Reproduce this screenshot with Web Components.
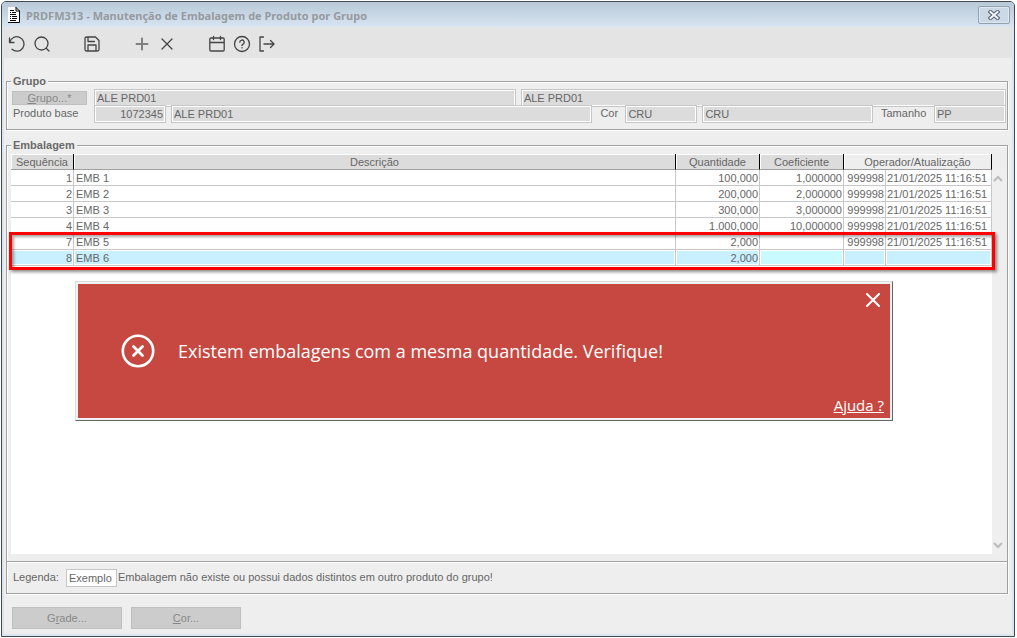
<!DOCTYPE html>
<html lang="pt-BR">
<head>
<meta charset="utf-8">
<title>PRDFM313 - Manutenção de Embalagem de Produto por Grupo</title>
<style>
  body { margin: 0; background: #fff; font: 11px/16px "Liberation Sans", Arial, sans-serif; color: #666; }
</style>
</head>
<body>
<app-window caption="PRDFM313 - Manutenção de Embalagem de Produto por Grupo">
  <tool-bar></tool-bar>
  <group-panel></group-panel>
  <package-panel>
    <error-dialog slot="dialog">Existem embalagens com a mesma quantidade. Verifique!</error-dialog>
  </package-panel>
  <legend-bar>Embalagem não existe ou possui dados distintos em outro produto do grupo!</legend-bar>
  <action-bar></action-bar>
</app-window>

<script>
const reset = `*{box-sizing:border-box} button,input{font:inherit;color:inherit;margin:0}`;

function define(name, html, setup) {
  const template = document.createElement('template');
  template.innerHTML = html;
  customElements.define(name, class extends HTMLElement {
    constructor() {
      super();
      this.attachShadow({ mode: 'open' }).append(template.content.cloneNode(true));
    }
    connectedCallback() { if (setup) setup(this, this.shadowRoot); }
  });
}

define('app-window', `
<style>${reset}
:host{display:flex;flex-direction:column;box-sizing:border-box;min-height:calc(100vh - 2px);margin:1px 2px 1px 1px;border:1px solid #42494e;border-radius:5px 5px 0 0;background:#d9e5f2;padding:0 2px 2px;overflow:hidden}
header{display:flex;align-items:center;height:25px;margin:0 -2px;padding:0 4px 0 6px;background:linear-gradient(#b9c9d7,#c7d6e5 50%,#d8e5f3)}
h1{flex:1;margin:0 0 0 6px;font:bold 11px/16px "Noto Sans","Open Sans",sans-serif;padding-top:2px;color:#969a9e}
button{display:flex;align-items:center;justify-content:center;width:32px;height:18px;padding:0;border:1px solid #93a0ae;border-radius:2px;background:#cbd8e6;box-shadow:inset 0 0 0 1px #dde8f3}
main{flex:1;display:flex;flex-direction:column;background:#eee}
</style>
<header>
  <svg width="12" height="16" viewBox="0 0 12 16"><path d="M0 0h8l4 4v12H0z" fill="#fff"/><path d="M8 0v4h4M11.5 4v11.5H0M8 .5l3.5 3.5" fill="none" stroke="#000"/><path d="M2 3.5h4M2 5.5h1m1 0h4M2 7.5h6M2 9.500h1m1 0h5M2 11.500h1m1 0h5M2 13.500h6" stroke="#000"/></svg>
  <h1></h1>
  <button aria-label="Fechar"><svg width="12" height="10" viewBox="0 0 12 10"><path d="M2.500 2l7 6m0-6l-7 6" stroke="#555f70" stroke-width="4" stroke-linecap="square"/><path d="M2.500 2l7 6m0-6l-7 6" stroke="#f4f7fa" stroke-width="2" stroke-linecap="square"/></svg></button>
</header>
<main><slot></slot></main>`, (host, root) => {
  root.querySelector('h1').textContent = host.getAttribute('caption');
});

define('tool-bar', `
<style>${reset}
:host{box-sizing:border-box;display:flex;height:31px;padding-top:2px;align-items:center;background:#e4e4e4}
button{display:flex;align-items:center;justify-content:center;width:25px;height:25px;padding:0;border:0;background:none;color:#444}
.gap{margin-left:25px}
.soft{color:#808080}
svg{fill:none;stroke:currentColor;stroke-width:1.300;stroke-linecap:round;stroke-linejoin:round}
</style>
<button aria-label="Desfazer"><svg width="18" height="18"><path d="M1.500 3v4.500H6M1.800 7.300A7.200 7.200 0 1 1 4 14.300"/></svg></button>
<button aria-label="Pesquisar"><svg width="18" height="18"><circle cx="8.500" cy="8.500" r="6.500"/><path d="M13.200 13.200L16 16"/></svg></button>
<button class="gap" aria-label="Salvar"><svg width="18" height="18"><path d="M3.500 2h9L16 5.500v9a1.500 1.500 0 0 1-1.500 1.500h-11A1.500 1.500 0 0 1 2 14.500v-11A1.500 1.500 0 0 1 3.500 2zM5 2v4.500h6.500M5 16V10h8v6"/></svg></button>
<button class="gap soft" aria-label="Adicionar"><svg width="18" height="18" style="stroke-width:2"><path d="M9 3.500v11M3.500 9h11"/></svg></button>
<button aria-label="Excluir"><svg width="18" height="18"><path d="M4 4l10 10M14 4L4 14"/></svg></button>
<button class="gap" aria-label="Calendário"><svg width="18" height="18"><path d="M3 3h12a1.200 1.200 0 0 1 1.200 1.200v10.600A1.200 1.200 0 0 1 15 16H3a1.200 1.200 0 0 1-1.200-1.200V4.200A1.200 1.200 0 0 1 3 3zM2 7.500h14M5.500 1.500v3M12.500 1.500v3"/></svg></button>
<button aria-label="Ajuda"><svg width="18" height="18"><circle cx="9" cy="9" r="7.500"/><path d="M6.800 7.200a2.200 2.200 0 1 1 3.300 1.900c-.8.400-1.100.8-1.100 1.400M9 12.700v.2"/></svg></button>
<button aria-label="Sair"><svg width="18" height="18"><path d="M5.500 2H2v14h3.500M6 9h10M12.500 5.500L16 9l-3.500 3.500"/></svg></button>`);

define('group-panel', `
<style>${reset}
:host{display:block;margin:16px 4px 0 2px}
fieldset{min-width:0;margin:0;padding:0 1px 6px 5px;border:1px solid #a0a0a0;box-shadow:1px 1px 0 #fff,inset 1px 1px 0 #fff}
legend{height:15px;line-height:15px;padding:0 2px;margin-left:-1px;background:#eee;font-weight:bold;color:#6a6a6a}
.row{display:flex;align-items:flex-start}
.row + .row{margin-top:-2px}
.lead{flex:none;width:82px}
button{display:block;width:75px;height:14px;margin-top:2px;padding:0;border:1px solid #bfbfbf;background:#ccc;color:#888;line-height:12px}
label{line-height:16px;padding-left:1px}
.mid{flex:none;padding-left:8px}
input{flex:none;width:72px;height:18px;min-width:0;padding:0 2px;border:1px solid #c6c6c6;box-shadow:inset 0 0 0 1px #fff;background:#dcdcdc;border-radius:0;outline:0}
.num{text-align:right}
.after{margin-left:5px}
</style>
<fieldset><legend>Grupo</legend>
  <div class="row">
    <div class="lead"><button id="g"><u>G</u>rupo...*</button></div>
    <input aria-labelledby="g" readonly value="ALE PRD01" style="flex:421 1 0">
    <input class="after" aria-label="Descrição do grupo" readonly value="ALE PRD01" style="flex:485 1 0">
  </div>
  <div class="row">
    <label class="lead" for="p">Produto base</label>
    <input id="p" class="num" readonly value="1072345">
    <input class="after" aria-label="Descrição do produto" readonly value="ALE PRD01" style="flex:424 1 0">
    <label class="mid" for="c" style="width:33px">Cor</label>
    <input id="c" readonly value="CRU">
    <input class="after" aria-label="Descrição da cor" readonly value="CRU" style="flex:168 1 0">
    <label class="mid" for="t" style="width:61px">Tamanho</label>
    <input id="t" readonly value="PP">
  </div>
</fieldset>`);

define('package-panel', `
<style>${reset}
:host{flex:1;display:flex;flex-direction:column;margin:15px 4px 0 2px}
section{flex:1;display:flex;flex-direction:column;padding:0 3px 7px 4px;border:1px solid #a0a0a0;box-shadow:1px 1px 0 #fff,inset 1px 1px 0 #fff}
h2{align-self:flex-start;height:15px;margin:-8px 0 1px;padding:0 2px;font:bold 11px/15px "Liberation Sans",Arial,sans-serif;background:#eee;color:#6a6a6a}
.list{flex:1;display:grid;grid-template-columns:1fr 12px;grid-template-rows:16px 1fr;position:relative}
.grid{grid-row:1/3;background:#fff;position:relative}
.scroll{grid-column:2;grid-row:2;display:flex;flex-direction:column;justify-content:space-between;align-items:center;padding:5px 0;background:#efefef}
.scroll svg{fill:none;stroke:#bbb;stroke-width:2}
table{width:100%;table-layout:fixed;border-collapse:separate;border-spacing:0}
th,td{height:16px;padding:2px 1px 0;line-height:13px;white-space:nowrap}
th{font-weight:normal;background:#dcdcdc;border-right:1px solid #000;border-bottom:1px solid #a0a0a0;box-shadow:inset 1px 1px 0 #fff}
th:last-child{background:#eee}
td{border-right:1px solid #c8c8c8;border-bottom:1px solid #c8c8c8;text-align:right}
td:nth-child(2){text-align:left;padding-left:2px}
td:nth-child(6){text-align:left}
.on td{background:#c8f0ff;box-shadow:inset 0 0 0 1px #fff}
.on td:nth-child(4){background:#c8faff}
.mark{position:absolute;left:-2px;right:-3px;top:78px;height:38px;border:3px solid #f00;box-shadow:2px 2px 3px rgba(0,0,0,.45),inset 2px 2px 3px rgba(0,0,0,.35);pointer-events:none;z-index:1}
::slotted(*){position:absolute;left:64px;right:111px;top:127px}
</style>
<section aria-labelledby="h"><h2 id="h">Embalagem</h2>
  <div class="list">
    <div class="scroll">
      <svg width="10" height="8"><path d="M1 6l4-4 4 4"/></svg>
      <svg width="10" height="8"><path d="M1 2l4 4 4-4"/></svg>
    </div>
    <div class="grid">
      <table>
        <colgroup><col style="width:63px"><col><col style="width:84px"><col style="width:84px"><col style="width:42px"><col style="width:106px"></colgroup>
        <thead><tr><th>Sequência</th><th>Descrição</th><th>Quantidade</th><th>Coeficiente</th><th colspan="2">Operador/Atualização</th></tr></thead>
        <tbody></tbody>
      </table>
      <div class="mark"></div>
    </div>
    <slot name="dialog"></slot>
  </div>
</section>`, (host, root) => {
  const stamp = ['999998', '21/01/2025 11:16:51'];
  const rows = [
    ['1', 'EMB 1', '100,000', '1,000000', ...stamp],
    ['2', 'EMB 2', '200,000', '2,000000', ...stamp],
    ['3', 'EMB 3', '300,000', '3,000000', ...stamp],
    ['4', 'EMB 4', '1.000,000', '10,000000', ...stamp],
    ['7', 'EMB 5', '2,000', '', ...stamp],
    ['8', 'EMB 6', '2,000', '', '', '']
  ];
  const body = root.querySelector('tbody');
  body.replaceChildren();
  rows.forEach((cells, i) => {
    const tr = body.insertRow();
    if (i === 5) tr.className = 'on';
    cells.forEach(text => { tr.insertCell().textContent = text; });
  });
});

define('error-dialog', `
<style>${reset}
:host{display:block;box-sizing:border-box;height:140px;border:1px solid;border-color:#ddd #666 #666 #ddd;background:#c64840;color:#fff;font-family:"Open Sans","Noto Sans",sans-serif;box-shadow:inset 0 0 0 2px #f2f2f2}
.box{display:grid;grid-template-columns:34px 1fr;grid-template-rows:32px 1fr 32px;column-gap:23px;height:100%;padding:2px 8px 2px 45px}
button{grid-column:2;justify-self:end;align-self:center;width:22px;height:22px;padding:0;border:0;background:none;display:grid;place-items:center}
.icon{grid-row:2;align-self:center}
p{grid-column:2;grid-row:2;align-self:center;margin:0;font-size:18px;line-height:24px}
a{grid-column:2;grid-row:3;justify-self:end;align-self:end;padding-bottom:3px;color:#fff;font-size:15px;line-height:20px}
svg{fill:none;stroke:#fff;stroke-linecap:round}
</style>
<div class="box" role="alertdialog">
  <button aria-label="Fechar aviso"><svg width="14" height="14" stroke-width="2"><path d="M1 1l12 12M13 1L1 13"/></svg></button>
  <svg class="icon" width="34" height="34"><circle cx="17" cy="17" r="15.200" stroke-width="2.600"/><path d="M12.500 12.500l9 9M21.500 12.500l-9 9" stroke-width="2.800"/></svg>
  <p><slot></slot></p>
  <a href="#ajuda">Ajuda ?</a>
</div>`);

define('legend-bar', `
<style>${reset}
:host{display:flex;align-items:center;height:32px;margin:0 4px 0 2px;padding-left:6px;border:1px solid #a0a0a0;border-top:0;box-shadow:1px 1px 0 #fff,inset 1px 1px 0 #fff;box-sizing:border-box}
label,span{padding-bottom:2px}
label{width:53px}
input{width:51px;height:18px;margin-right:1px;padding:0 2px;border:1px solid #c6c6c6;border-radius:0;background:#fff}
</style>
<label for="e">Legenda:</label><input id="e" readonly value="Exemplo"><span><slot></slot></span>`);

define('action-bar', `
<style>${reset}
:host{display:flex;gap:9px;padding:13px 8px 5px}
button{width:110px;height:22px;padding:0;border:1px solid #bfbfbf;background:#ccc;color:#888}
</style>
<button>G<u>r</u>ade...</button><button><u>C</u>or...</button>`);
</script>
</body>
</html>
